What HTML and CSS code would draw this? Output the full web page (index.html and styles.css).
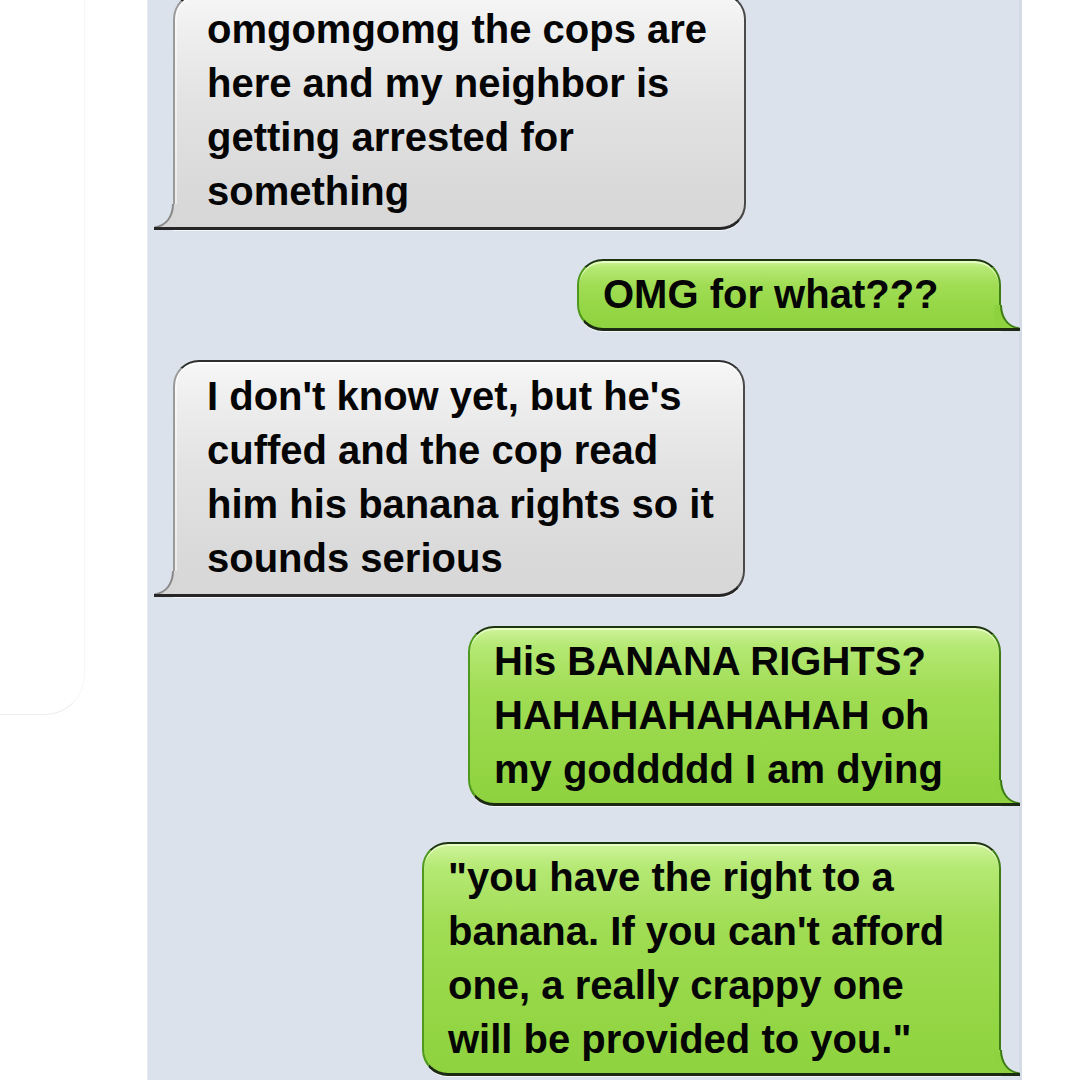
FILE: index.html
```html
<!DOCTYPE html>
<html lang="en">
<head>
<meta charset="utf-8">
<title>Messages</title>
<link rel="stylesheet" href="styles.css">
</head>
<body>
<div class="screen">
  <aside class="side side-left">
    <div class="ghost-card"></div>
  </aside>
  <main class="thread">
    <div class="msg in w-573 first">
      <p>omgomgomg the cops are<br>here and my neighbor is<br>getting arrested for<br>something</p>
      <svg class="tail tail-in" width="26" height="26" viewBox="0 0 26 26"><path class="tail-fill" d="M19 0 L26 0 L26 24 L0 24 C6 22.5 11 20 14 16 C17 12 19 7 19 0 Z"/><path class="tail-edge" d="M19 0 C19 7 17 12 14 16 C11 20 6 22.5 0.5 23.5"/><path class="tail-base" d="M0 24.5 L26 24.5"/></svg>
    </div>
    <div class="msg out w-424">
      <p>OMG for what???</p>
      <svg class="tail tail-out" width="26" height="26" viewBox="0 0 26 26"><path class="tail-fill" d="M7 0 L0 0 L0 24 L26 24 C20 22.5 15 20 12 16 C9 12 7 7 7 0 Z"/><path class="tail-edge" d="M7 0 C7 7 9 12 12 16 C15 20 20 22.5 25.5 23.5"/><path class="tail-base" d="M0 24.5 L26 24.5"/></svg>
    </div>
    <div class="msg in w-572">
      <p>I don't know yet, but he's<br>cuffed and the cop read<br>him his banana rights so it<br>sounds serious</p>
      <svg class="tail tail-in" width="26" height="26" viewBox="0 0 26 26"><path class="tail-fill" d="M19 0 L26 0 L26 24 L0 24 C6 22.5 11 20 14 16 C17 12 19 7 19 0 Z"/><path class="tail-edge" d="M19 0 C19 7 17 12 14 16 C11 20 6 22.5 0.5 23.5"/><path class="tail-base" d="M0 24.5 L26 24.5"/></svg>
    </div>
    <div class="msg out w-533">
      <p>His BANANA RIGHTS?<br>HAHAHAHAHAHAH oh<br>my goddddd I am dying</p>
      <svg class="tail tail-out" width="26" height="26" viewBox="0 0 26 26"><path class="tail-fill" d="M7 0 L0 0 L0 24 L26 24 C20 22.5 15 20 12 16 C9 12 7 7 7 0 Z"/><path class="tail-edge" d="M7 0 C7 7 9 12 12 16 C15 20 20 22.5 25.5 23.5"/><path class="tail-base" d="M0 24.5 L26 24.5"/></svg>
    </div>
    <div class="msg out w-579 gap-lg">
      <p>"you have the right to a<br>banana. If you can't afford<br>one, a really crappy one<br>will be provided to you."</p>
      <svg class="tail tail-out" width="26" height="26" viewBox="0 0 26 26"><path class="tail-fill" d="M7 0 L0 0 L0 24 L26 24 C20 22.5 15 20 12 16 C9 12 7 7 7 0 Z"/><path class="tail-edge" d="M7 0 C7 7 9 12 12 16 C15 20 20 22.5 25.5 23.5"/><path class="tail-base" d="M0 24.5 L26 24.5"/></svg>
    </div>
  </main>
  <aside class="side side-right"></aside>
</div>
</body>
</html>
```
FILE: styles.css
```css
html, body {
  margin: 0;
  padding: 0;
  background: #ffffff;
}

.screen {
  display: grid;
  grid-template-columns: 147px 875px 1fr;
  height: 1080px;
  overflow: hidden;
}

.side {
  background: #ffffff;
}

.ghost-card {
  margin-top: -40px;
  margin-left: -60px;
  width: 145px;
  height: 755px;
  border: 1px solid #f6f6f6;
  border-bottom-color: #ededed;
  border-radius: 40px;
  box-sizing: border-box;
}

.thread {
  background: #dce2ec;
  border-left: 1px solid #e7ebf2;
  border-right: 3px solid #d4dbe6;
  display: flex;
  flex-direction: column;
  gap: 29px;
  padding: 0 18px 0 25px;
}

.msg {
  position: relative;
  box-sizing: border-box;
  border-style: solid;
  border-width: 2px 2px 3px 2px;
  border-radius: 26px;
  font-family: "Liberation Sans", Arial, sans-serif;
  font-weight: bold;
  font-size: 40px;
  line-height: 54px;
  color: #050505;
  white-space: nowrap;
}

.msg p {
  margin: 0;
}

.first {
  margin-top: -7px;
}

.gap-lg {
  margin-top: 7px;
}

.w-573 { width: 573px; }
.w-572 { width: 572px; }
.w-424 { width: 424px; }
.w-533 { width: 533px; }
.w-579 { width: 579px; }

.in {
  align-self: flex-start;
  padding: 7px 20px 9px 32px;
  border-bottom-left-radius: 0;
  background: linear-gradient(180deg, #f7f7f7 0%, #efefef 14%, #e3e3e3 45%, #dadada 80%, #d7d7d7 100%);
  border-color: #2e2e2e #4a4a4a #262626 #9a9a9a;
  box-shadow: inset 0 2px 0 rgba(255, 255, 255, 0.85), inset 2px 0 0 rgba(255, 255, 255, 0.5), 0 1px 0 rgba(255, 255, 255, 0.7);
}

.out {
  align-self: flex-end;
  padding: 6px 20px 7px 24px;
  border-bottom-right-radius: 0;
  background: linear-gradient(180deg, #cff39c 0%, #b5e974 10%, #a1dd55 35%, #95d746 70%, #8fd23f 100%);
  border-color: #1d3410 #3d7d15 #1c2a14 #4f9a1e;
  box-shadow: inset 0 2px 0 rgba(235, 255, 205, 0.8), 0 1px 0 rgba(255, 255, 255, 0.7);
}

.tail {
  position: absolute;
  bottom: -3px;
  display: block;
  overflow: visible;
}

.tail-in {
  left: -21px;
}

.tail-out {
  right: -21px;
}

.tail-in .tail-fill { fill: #d7d7d7; }
.tail-in .tail-edge { fill: none; stroke: #8a8a8a; stroke-width: 2; }
.tail-in .tail-base { fill: none; stroke: #262626; stroke-width: 3; }

.tail-out .tail-fill { fill: #8fd23f; }
.tail-out .tail-edge { fill: none; stroke: #3d7d15; stroke-width: 2; }
.tail-out .tail-base { fill: none; stroke: #1c2a14; stroke-width: 3; }
```
